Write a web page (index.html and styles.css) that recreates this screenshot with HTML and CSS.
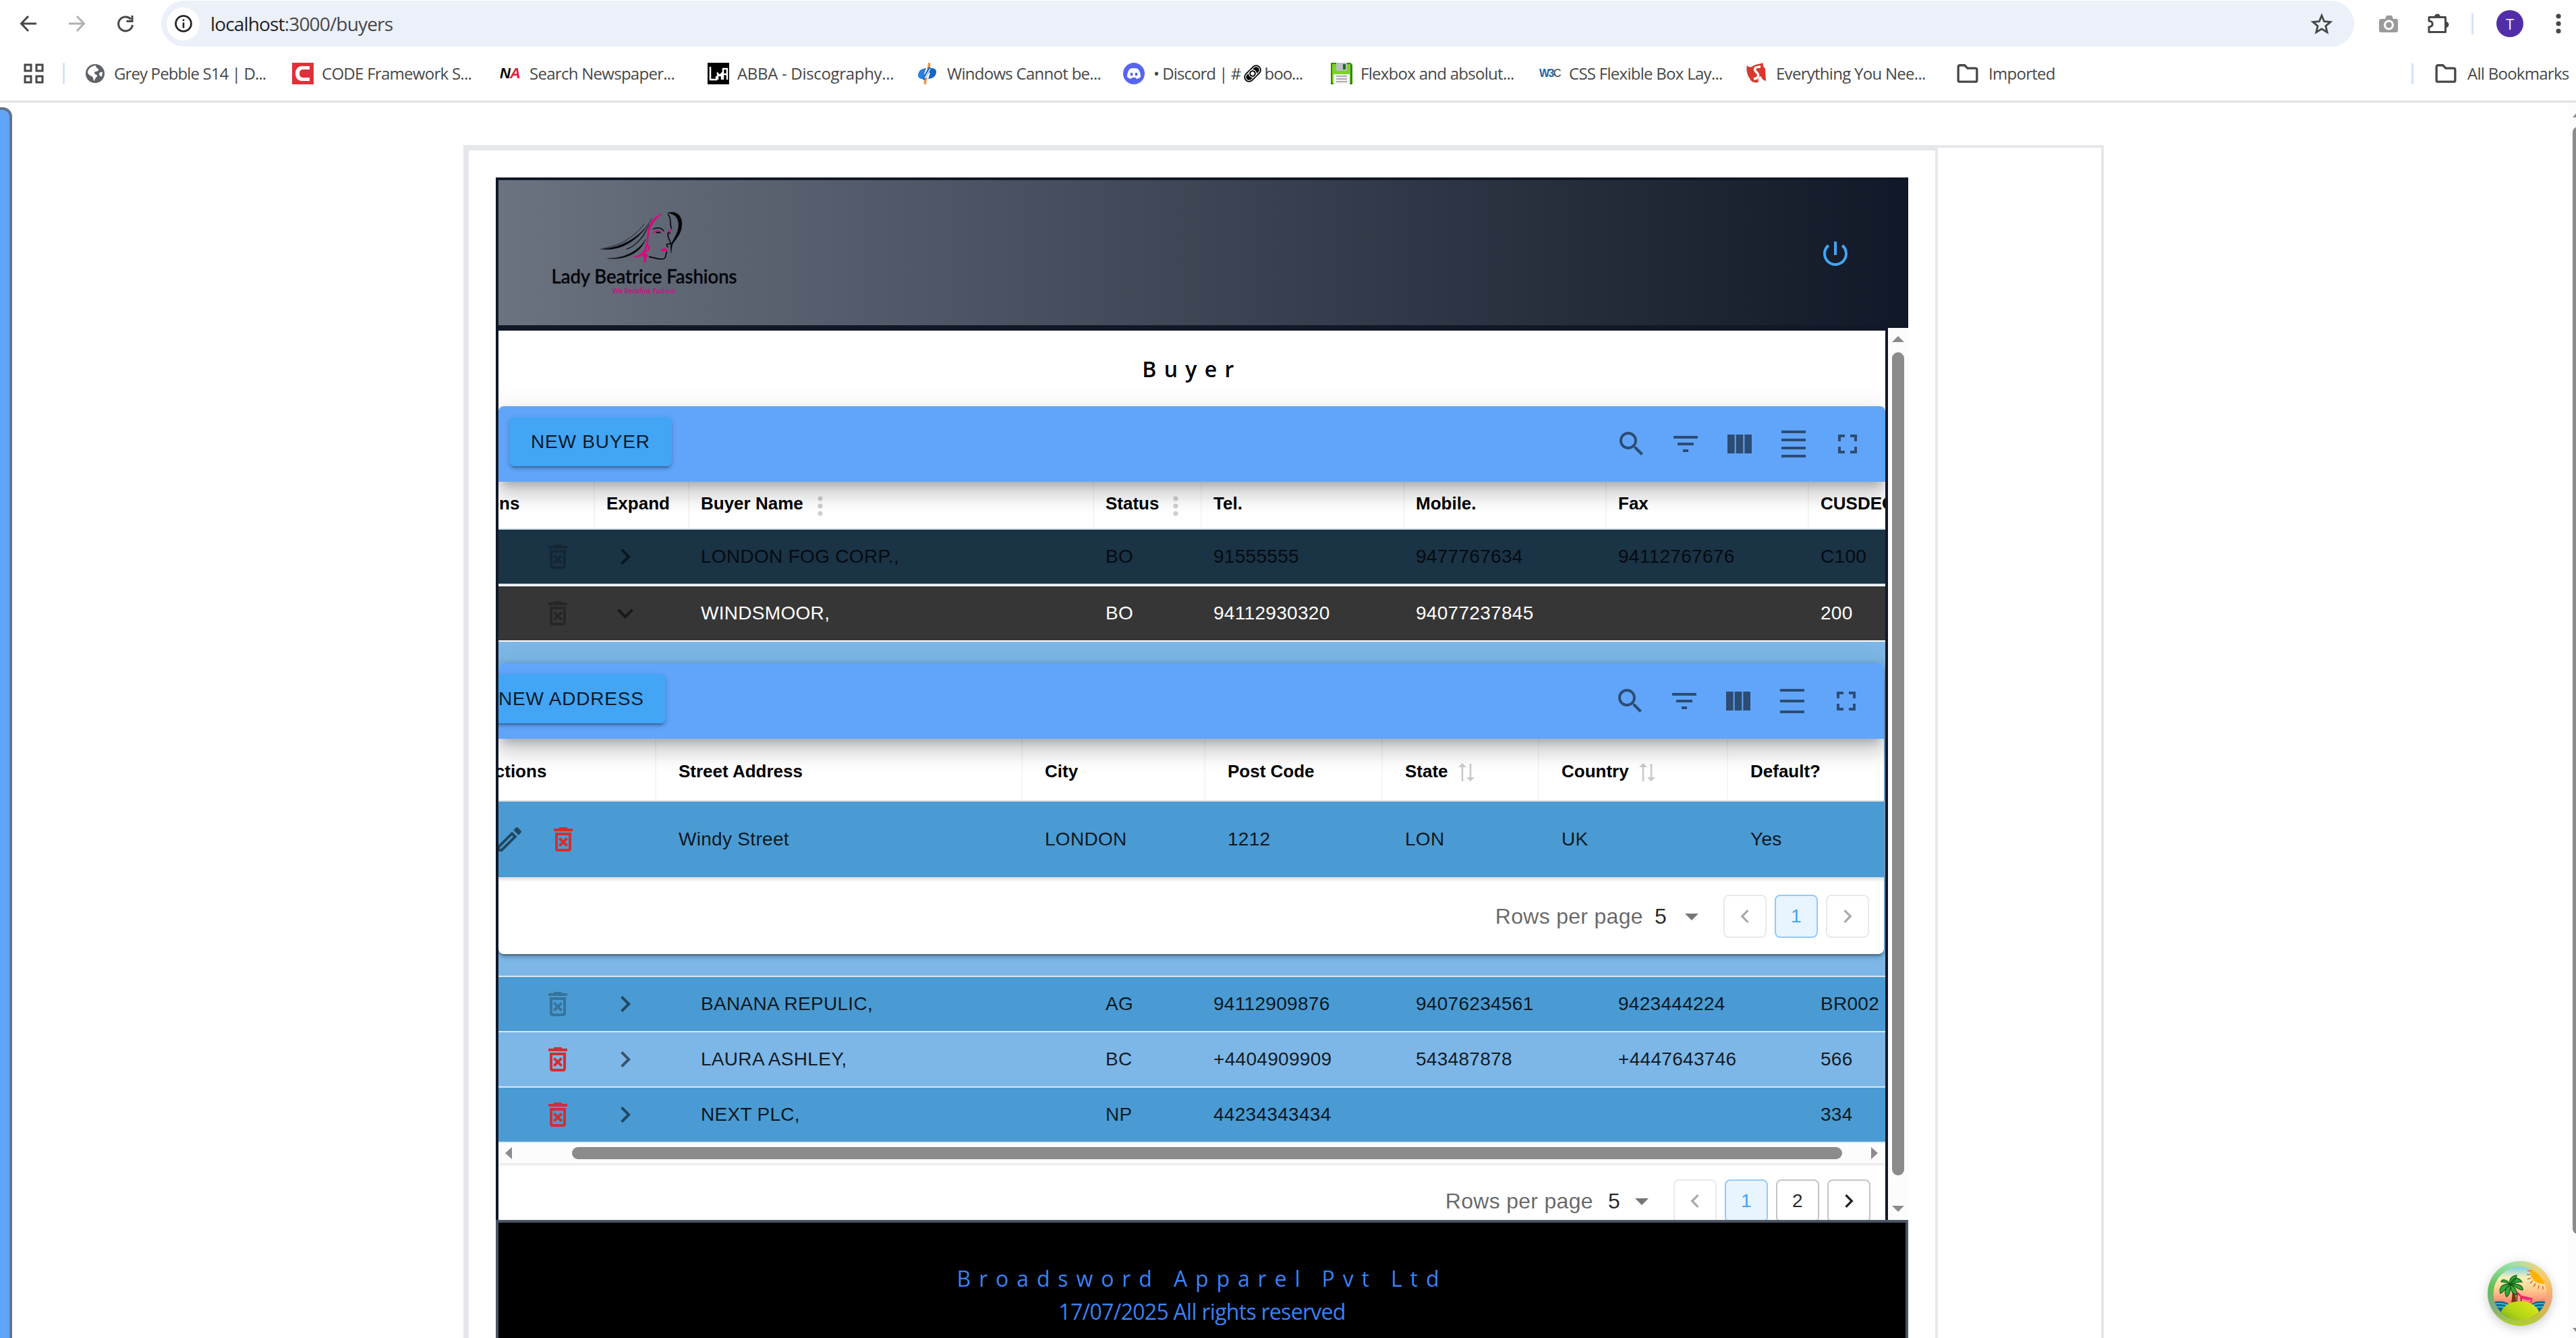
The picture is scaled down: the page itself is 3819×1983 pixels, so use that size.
FILE: index.html
```
<!DOCTYPE html>
<html lang="en">
<head>
<meta charset="utf-8">
<title>Buyers</title>
<link rel="stylesheet" href="styles.css">
</head>
<body>
<svg class="defs" width="0" height="0" aria-hidden="true">
  <symbol id="search" viewBox="0 0 24 24"><path d="M15.5 14h-.79l-.28-.27C15.41 12.59 16 11.11 16 9.5 16 5.91 13.09 3 9.5 3S3 5.91 3 9.5 5.91 16 9.5 16c1.61 0 3.09-.59 4.23-1.57l.27.28v.79l5 4.99L20.49 19l-4.99-5zm-6 0C7.01 14 5 11.99 5 9.5S7.01 5 9.5 5 14 7.01 14 9.5 11.99 14 9.5 14z"/></symbol>
  <symbol id="filter" viewBox="0 0 24 24"><path d="M10 18h4v-2h-4v2zM3 6v2h18V6H3zm3 7h12v-2H6v2z"/></symbol>
  <symbol id="columns" viewBox="0 0 24 24"><path d="M14.67 5v14H9.33V5h5.34zm1 14H21V5h-5.33v14zm-7.34 0V5H3v14h5.33z"/></symbol>
  <symbol id="dense" viewBox="0 0 24 24"><path d="M3 2h18v2H3zM3 20h18v2H3zM3 14h18v2H3zM3 8h18v2H3z"/></symbol>
  <symbol id="loose" viewBox="0 0 24 24"><path d="M3 3h18v2H3zM3 19h18v2H3zM3 11h18v2H3z"/></symbol>
  <symbol id="fullscreen" viewBox="0 0 24 24"><path d="M7 14H5v5h5v-2H7v-3zm-2-4h2V7h3V5H5v5zm12 7h-3v2h5v-5h-2v3zM14 5v2h3v3h2V5h-5z"/></symbol>
  <symbol id="trash" viewBox="0 0 24 24"><path d="M14.12 10.47 12 12.59l-2.13-2.12-1.41 1.41L10.59 14l-2.12 2.12 1.41 1.41L12 15.41l2.12 2.12 1.41-1.41L13.41 14l2.12-2.12zM15.5 4l-1-1h-5l-1 1H5v2h14V4zM6 19c0 1.1.9 2 2 2h8c1.1 0 2-.9 2-2V7H6v12zM8 9h8v10H8V9z"/></symbol>
  <symbol id="edit" viewBox="0 0 24 24"><path d="m14.06 9.02.92.92L5.92 19H5v-.92l9.06-9.06M17.66 3c-.25 0-.51.1-.7.29l-1.83 1.83 3.75 3.75 1.83-1.83c.39-.39.39-1.02 0-1.41l-2.34-2.34c-.2-.2-.45-.29-.71-.29zm-3.6 3.19L3 17.25V21h3.75L17.81 9.94l-3.75-3.75z"/></symbol>
  <symbol id="expand" viewBox="0 0 24 24"><path d="M16.59 8.59 12 13.17 7.41 8.59 6 10l6 6 6-6z"/></symbol>
  <symbol id="prev" viewBox="0 0 24 24"><path d="M15.41 7.41 14 6l-6 6 6 6 1.41-1.41L10.83 12z"/></symbol>
  <symbol id="next" viewBox="0 0 24 24"><path d="M10 6 8.59 7.41 13.17 12l-4.58 4.59L10 18l6-6z"/></symbol>
  <symbol id="drop" viewBox="0 0 24 24"><path d="m7 10 5 5 5-5z"/></symbol>
  <symbol id="more" viewBox="0 0 8 30"><circle cx="4" cy="4" r="3.6"/><circle cx="4" cy="15" r="3.6"/><circle cx="4" cy="26" r="3.6"/></symbol>
  <symbol id="sort" viewBox="0 0 24 28"><path d="M6 0 0 6h4.7v21h2.6V6H12zM16.7 1v20H12l6 6 6-6h-4.7V1z"/></symbol>
  <symbol id="power" viewBox="0 0 24 24"><path d="M13 3h-2v10h2V3zm4.83 2.17-1.42 1.42C17.99 7.86 19 9.81 19 12c0 3.87-3.13 7-7 7s-7-3.13-7-7c0-2.19 1.01-4.14 2.58-5.42L6.17 5.17C4.23 6.82 3 9.26 3 12c0 4.97 4.03 9 9 9s9-4.03 9-9c0-2.74-1.23-5.18-3.17-6.83z"/></symbol>
  <symbol id="folder" viewBox="0 0 32 28"><path d="M3.5 4.5a2 2 0 0 1 2-2h6.5l4 4h10.500a2 2 0 0 1 2 2v14a2 2 0 0 1-2 2h-21a2 2 0 0 1-2-2z" fill="none" stroke="#474747" stroke-width="3"/></symbol>
</svg>

<header class="browser">
  <div class="toolbar">
    <svg class="nav" viewBox="0 0 26 26"><path d="M25 13H3M13 2 2.500 13 13 24" fill="none" stroke="#474747" stroke-width="3"/></svg>
    <svg class="nav" viewBox="0 0 26 26"><path d="M1 13h22M13 2l10.500 11L13 24" fill="none" stroke="#b0b0b0" stroke-width="3"/></svg>
    <svg class="nav" viewBox="0 0 26 26"><path d="M23.500 15A10.500 10.500 0 1 1 21 6.500" fill="none" stroke="#474747" stroke-width="3"/><path d="M24.500 1v10h-10V8h7V1z" fill="#474747"/></svg>
    <div class="omnibox">
      <div class="site-info"><svg width="28" height="28" viewBox="0 0 28 28"><circle cx="14" cy="14" r="11.500" fill="none" stroke="#1f1f1f" stroke-width="2.600"/><path d="M12.700 12.500h2.600v8h-2.600zM12.700 7.500h2.600v2.800h-2.600z" fill="#1f1f1f"/></svg></div>
      <div class="url"><span>localhost</span>:3000/buyers</div>
      <svg class="star" width="34" height="32" viewBox="0 0 34 32"><path d="m17 4 3.600 8.700 9.400.8-7.100 6.100 2.200 9.200L17 23.900l-8.100 4.900 2.200-9.200L4 13.500l9.400-.8z" fill="none" stroke="#474747" stroke-width="2.800"/></svg>
    </div>
    <div class="actions">
      <svg width="32" height="32" viewBox="0 0 32 32"><path d="M4 9h6l2-5h8l2 5h4a3 3 0 0 1 3 3v14a3 3 0 0 1-3 3H4a3 3 0 0 1-3-3V12a3 3 0 0 1 3-3z" fill="#9b9b9b"/><circle cx="15.500" cy="18" r="6" fill="none" stroke="#fff" stroke-width="3"/></svg>
      <svg class="puzzle" width="34" height="34" viewBox="0 0 34 34"><path d="M3 7.500h24.500V16v13.500H3V22c7-1 7-8 0-9z" fill="none" stroke="#474747" stroke-width="3" stroke-linejoin="round"/><path d="M11 7a4.500 4.500 0 0 1 9 0zM28 14a4.500 4.500 0 0 1 0 9z" fill="#474747"/></svg>
      <i class="rule"></i>
      <b class="avatar">T</b>
      <svg class="kebab" width="8" height="30" fill="#474747"><use href="#more"/></svg>
    </div>
  </div>
  <nav class="bookmarks">
    <svg width="30" height="30" viewBox="0 0 30 30"><path d="M2 2h9v9H2zM19 2h9v9h-9zM2 19h9v9H2zM19 19h9v9h-9z" fill="none" stroke="#474747" stroke-width="3"/></svg>
    <i class="rule"></i>
    <div class="links">
      <a class="globe"><svg width="28" height="28" viewBox="0 0 28 28"><circle cx="14" cy="14" r="14" fill="#5f6368"/><path d="M15 2c-1 4 5 4 4 7-2 3-6 1-6 4s5 2 4 5c-2 2-3 3-4 7-2-1-1-5-4-7-3-1-5-3-6-5 0-6 5-10 12-11zM25 12c-3-1-5 1-5 3s3 3 4 4z" fill="#fff"/></svg>Grey Pebble S14 | D...</a>
      <a><svg viewBox="0 0 32 32"><path d="M0 0h32v32H0z" fill="#e0303a"/><path d="M26 10V5H14Q5 6 5 16t9 11h12v-5H15q-4-1-4-6t4-6z" fill="#fff"/></svg>CODE Framework S...</a>
      <a class="wide"><em class="na">N<span>A</span></em>Search Newspaper...</a>
      <a class="abba"><svg viewBox="0 0 32 32"><path d="M0 0h32v32H0z"/><path d="M4 6v19h9v-5M15 25v-9l3 3 3-3v9M23 25V9h6v16M23 17h6" fill="none" stroke="#fff" stroke-width="2.500"/></svg>ABBA - Discography...</a>
      <a class="wide"><svg viewBox="0 0 32 32"><path d="M17 0c2 4-1 6-1 10M12 32c-2-4 1-6 1-10" fill="none" stroke="#f6923a" stroke-width="3.500"/><path d="M1 18c1-7 5-9 12-10l-3 9 3 1-3 6c-6 0-9-1-9-6z" fill="#2a7fe0"/><path d="M28 14c-1 7-5 9-12 10l3-9-3-1 3-6c6 0 9 1 9 6z" fill="#1565c8"/><path d="m9 25 10-18" stroke="#1565c8" stroke-width="4"/><path d="m11 23 8-14" stroke="#fff" stroke-width="1.500"/></svg>Windows Cannot be...</a>
      <a class="discord"><svg viewBox="0 0 32 32"><circle cx="16" cy="16" r="16" fill="#5865f2"/><path d="M10 9q6-2 12 0 4 5 4 12-3 3-6 3l-1-2h-6l-1 2q-3 0-6-3 0-7 4-12z" fill="#fff"/><ellipse cx="12.500" cy="17" rx="2" ry="2.500" fill="#5865f2"/><ellipse cx="19.500" cy="17" rx="2" ry="2.500" fill="#5865f2"/></svg>• Discord | #<svg class="chain" viewBox="0 0 28 28"><g transform="rotate(-45 14 14)" fill="none"><rect x="-1" y="6.500" width="30" height="15" rx="7.500" fill="#000"/><rect x="1.500" y="9" width="25" height="10" rx="5" stroke="#fff" stroke-width="1.200"/><circle cx="14" cy="14" r="5.500" fill="#000" stroke="#fff" stroke-width="1.300"/><circle cx="14" cy="14" r="2.800" fill="#fff"/></g></svg>boo...</a>
      <a><svg viewBox="0 0 32 32"><path d="M0 0h29l3 3v29H0z" fill="#2d8a10"/><path d="M2 2h27v28H2z" fill="#7bd321"/><path d="M8 0h16v12H8z" fill="#b9bec2"/><path d="M18 2h4v8h-4z" fill="#256b12"/><path d="M4 17h24v15H4z" fill="#f5f5f5"/><path d="M8 20h16M8 24h16M8 28h16" stroke="#aaa" stroke-width="2"/></svg>Flexbox and absolut...</a>
      <a class="wide"><em class="w3c">W3<span>C</span></em>CSS Flexible Box Lay...</a>
      <a class="wide"><svg viewBox="0 0 32 32"><path d="M1 4c2 2 4 3 7 2 5-4 12-4 17-6-1 4 0 5 3 9l1 18c-4-1-6-3-7-7-4 1-5 4-4 9-6 1-10 0-12-4C2 20-1 11 1 4z" fill="#d8382c"/><path d="M21 6c-8 0-11 3-6 8s3 9-4 10" fill="none" stroke="#fff" stroke-width="3.500"/></svg>Everything You Nee...</a>
      <a class="dir"><svg viewBox="0 0 32 28"><use href="#folder"/></svg>Imported</a>
    </div>
    <i class="rule end"></i>
    <a class="all"><svg viewBox="0 0 32 28"><use href="#folder"/></svg>All Bookmarks</a>
  </nav>
</header>

<div class="page">
  <aside class="drawer"></aside>
  <div class="outer"><div class="inner"><main class="panel">
    <header class="banner">
      <svg class="logo" width="280" height="136" viewBox="0 0 280 136">
        <g transform="translate(45 -8) scale(.3333)" fill="none" stroke="#05060a" stroke-width="5" stroke-linecap="round">
          <path d="M92 207C180 206 280 150 319 70 270 165 180 222 92 207z" fill="#05060a" stroke-width="1"/>
          <path d="M105 204C190 190 250 145 285 95" stroke-width="2"/>
          <path d="M205 208C250 192 282 160 296 118M213 207C250 190 290 140 306 100" stroke-width="2.500"/>
          <path d="M122 249C200 250 262 215 292 163 270 225 200 258 122 249z" fill="#05060a" stroke-width="1"/>
          <path d="M370 48C325 62 300 95 298 150 296 195 285 238 232 242 275 252 300 225 304 160 308 110 325 80 370 48z" fill="#e5007e" stroke="none"/>
          <path d="M300 190C312 200 306 216 292 218" stroke="#e5007e" stroke-width="6"/>
          <circle cx="289" cy="237" r="11" fill="#e5007e" stroke="none"/><ellipse cx="288" cy="257" rx="6" ry="9" fill="#e5007e" stroke="none"/>
          <path d="M388 47C430 34 453 60 453 95 453 140 425 162 410 188L405 226 402 190C420 155 440 130 438 95 436 65 418 50 388 47z" fill="#05060a" stroke-width="1"/>
          <path d="M391 54C409 72 396 92 406 115" stroke-width="5"/>
          <path d="M325 118C345 110 362 112 372 127" stroke-width="4"/>
          <path d="M328 133q16-12 30-2M388 135q8-10 18-12" stroke="#e5007e" stroke-width="6"/>
          <path d="M340 134h16M392 136h8" stroke-width="5"/>
          <path d="M391 140C388 160 402 168 403 182 399 190 386 178 385 190L390 198"/>
          <path d="M358 211q16-14 30-2-8 18-30 2z" fill="#e5007e" stroke="none"/>
          <path d="M386 220C378 230 386 250 366 252 342 252 330 246 308 242"/>
        </g>
        <text class="brand" x="2.500" y="112" textLength="275" lengthAdjust="spacingAndGlyphs">Lady Beatrice Fashions</text>
        <text class="tagline" x="93" y="127" textLength="94" lengthAdjust="spacingAndGlyphs">We Redefine Fashion</text>
      </svg>
      <svg class="power" width="48" height="48"><use href="#power"/></svg>
    </header>

    <div class="scroll">
      <section class="content">
        <h1>Buyer</h1>
        <div class="bar">
          <button class="btn">NEW BUYER</button>
          <div class="tools"><svg><use href="#search"/></svg><svg><use href="#filter"/></svg><svg><use href="#columns"/></svg><svg><use href="#dense"/></svg><svg><use href="#fullscreen"/></svg></div>
        </div>
        <div class="head buyers"><div class="clip">Actions</div><div>Expand</div><div>Buyer Name<svg class="dots"><use href="#more"/></svg></div><div>Status<svg class="dots"><use href="#more"/></svg></div><div>Tel.</div><div>Mobile.</div><div>Fax</div><div>CUSDEC</div></div>
        <div class="row buyers selected"><div class="ico"><svg><use href="#trash"/></svg></div><div class="ico exp"><svg class="side"><use href="#expand"/></svg></div><div>LONDON FOG CORP.,</div><div>BO</div><div>91555555</div><div>9477767634</div><div>94112767676</div><div>C100</div></div>
        <div class="row buyers open"><div class="ico"><svg><use href="#trash"/></svg></div><div class="ico exp"><svg><use href="#expand"/></svg></div><div>WINDSMOOR,</div><div>BO</div><div>94112930320</div><div>94077237845</div><div></div><div>200</div></div>

        <div class="detail">
          <div class="paper">
            <div class="bar">
              <button class="btn">NEW ADDRESS</button>
              <div class="tools"><svg><use href="#search"/></svg><svg><use href="#filter"/></svg><svg><use href="#columns"/></svg><svg><use href="#loose"/></svg><svg><use href="#fullscreen"/></svg></div>
            </div>
            <div class="head address"><div class="clip">Actions</div><div>Street Address</div><div>City</div><div>Post Code</div><div>State<svg class="sort"><use href="#sort"/></svg></div><div>Country<svg class="sort"><use href="#sort"/></svg></div><div>Default?</div></div>
            <div class="row address"><div class="ico"><svg class="pen"><use href="#edit"/></svg><svg class="red"><use href="#trash"/></svg></div><div>Windy Street</div><div>LONDON</div><div>1212</div><div>LON</div><div>UK</div><div>Yes</div></div>
            <div class="pager">
              <span>Rows per page</span><b>5</b><svg class="drop"><use href="#drop"/></svg>
              <div class="pages"><a class="off"><svg><use href="#prev"/></svg></a><a class="on">1</a><a class="off"><svg><use href="#next"/></svg></a></div>
            </div>
          </div>
        </div>

        <div class="row buyers dark"><div class="ico faded"><svg><use href="#trash"/></svg></div><div class="ico exp"><svg class="side"><use href="#expand"/></svg></div><div>BANANA REPULIC,</div><div>AG</div><div>94112909876</div><div>94076234561</div><div>9423444224</div><div>BR002</div></div>
        <div class="row buyers light"><div class="ico"><svg class="red"><use href="#trash"/></svg></div><div class="ico exp"><svg class="side"><use href="#expand"/></svg></div><div>LAURA ASHLEY,</div><div>BC</div><div>+4404909909</div><div>543487878</div><div>+4447643746</div><div>566</div></div>
        <div class="row buyers dark"><div class="ico"><svg class="red"><use href="#trash"/></svg></div><div class="ico exp"><svg class="side"><use href="#expand"/></svg></div><div>NEXT PLC,</div><div>NP</div><div>44234343434</div><div></div><div></div><div>334</div></div>

        <div class="hbar"><svg width="10" height="18" viewBox="0 0 10 18"><path d="M10 0v18L0 9z"/></svg><i></i><svg width="10" height="18" viewBox="0 0 10 18"><path d="M0 0v18l10-9z"/></svg></div>
        <div class="pager main">
          <span>Rows per page</span><b>5</b><svg class="drop"><use href="#drop"/></svg>
          <div class="pages"><a class="off"><svg><use href="#prev"/></svg></a><a class="on">1</a><a>2</a><a><svg><use href="#next"/></svg></a></div>
        </div>
      </section>
      <div class="vbar"><svg width="18" height="9" viewBox="0 0 18 9"><path d="M0 9 9 0l9 9z"/></svg><i></i><svg width="18" height="9" viewBox="0 0 18 9"><path d="M0 0h18L9 9z"/></svg></div>
    </div>

    <footer><p class="company">Broadsword Apparel Pvt Ltd</p><p class="rights">17/07/2025 All rights reserved</p></footer>
  </main></div></div>
  <div class="winbar"><svg width="5" height="6" viewBox="0 0 5 6"><path d="M0 6 5 0v6z"/></svg><i></i><svg width="5" height="6" viewBox="0 0 5 6"><path d="M0 0h5v6z"/></svg></div>

  <svg class="devtools" width="120" height="120" viewBox="0 0 120 120">
    <defs>
      <linearGradient id="shade" x1="0" y1="0" x2="0" y2="1"><stop offset="0" stop-color="#9be7b4"/><stop offset=".4" stop-color="#63bf52"/><stop offset=".7" stop-color="#7dab82"/><stop offset="1" stop-color="#b3d12c"/></linearGradient>
      <linearGradient id="warm" x1="0" y1="0" x2="0" y2="1"><stop offset="0" stop-color="#e8d98a"/><stop offset=".3" stop-color="#fcc764"/><stop offset=".6" stop-color="#f3a276"/><stop offset="1" stop-color="#b3d12c"/></linearGradient>
      <linearGradient id="fade"><stop offset=".35" stop-color="#fff" stop-opacity="0"/><stop offset=".75" stop-color="#fff"/></linearGradient>
      <mask id="right"><path d="M0 0h120v120H0z" fill="url(#fade)"/></mask>
      <linearGradient id="sky" x1="0" y1="0" x2="0" y2="1"><stop offset="0" stop-color="#74cdf0"/><stop offset=".2" stop-color="#f2f0b8"/><stop offset=".38" stop-color="#ffd79a"/><stop offset=".65" stop-color="#ff8f70"/></linearGradient>
      <linearGradient id="sand" x1="0" y1="1" x2="1" y2="0"><stop offset="0" stop-color="#5a9e10"/><stop offset=".5" stop-color="#b5d516"/><stop offset="1" stop-color="#e2ec1c"/></linearGradient>
      <clipPath id="disc"><circle cx="60" cy="60" r="39.500"/></clipPath>
    </defs>
    <circle cx="60" cy="60" r="48" fill="url(#shade)"/>
    <circle cx="60" cy="60" r="48" fill="url(#warm)" mask="url(#right)"/>
    <g clip-path="url(#disc)">
      <path d="M20 20h80v80H20z" fill="url(#sky)"/>
      <circle cx="94" cy="27" r="19" fill="#ffb300"/>
      <g stroke="#e8622c" stroke-width="1.500"><path d="m76 27-5-1M75 32h-5M76 37l-5 2M79 41l-4 4M83 45l-3 5M88 48l-1 5M94 49v5"/></g>
      <path d="M20 73q14-4 24 3v30H20zM100 73q-14-4-24 3v30h24z" fill="#0a5f80"/>
      <path d="M20 76q14-3 22 2M20 81q12-3 19 1M100 76q-14-3-22 2M100 81q-12-3-19 1" stroke="#22b6da" stroke-width="2.500" fill="none"/>
      <path d="M47 46c2 9 2 17 0 27h7c0-11-2-19-6-28z" fill="#7a3510"/>
      <g fill="#35a936" stroke="#0e5a18" stroke-width="1.200"><path d="M46 47C40 37 32 39 32 43c4 0 8 0 14 4zM46 47C34 44 28 52 31 60c5-2 8-9 15-13zM46 47c-8 4-10 11-6 18 5-3 6-10 6-18zM46 47c0 8 3 14 9 15 1-7-3-12-9-15zM46 47c7 1 11 8 18 8 1-6-7-11-18-8zM46 47c2-9 10-14 17-4-5-1-10 1-17 4zM46 47c-4-9 3-13 9-14 0 5-4 9-9 14z"/></g>
      <path d="m55 58 6 6 16 4-1 6M60 66l14 3" stroke="#f0267a" stroke-width="2.500" fill="none"/><path d="m56 60-1 12M62 67l-1 8" stroke="#3a1020" stroke-width="1.200"/>
      <ellipse cx="60" cy="92" rx="29" ry="20.500" fill="url(#sand)"/>
    </g>
  </svg>
</div>
</body>
</html>
```
FILE: styles.css
```
* { box-sizing: border-box; }
html, body { margin: 0; height: 100%; overflow: hidden; background: #fff; }
body { display: flex; flex-direction: column; font-family: "Liberation Sans", Arial, sans-serif; color: rgba(0, 0, 0, .87); }
svg { display: block; flex: none; }
i { display: block; }
.defs { position: absolute; }

/* Browser chrome */
.browser { flex: none; height: 152px; border-bottom: 3px solid #e0e0e0; font-family: "Open Sans", sans-serif; color: #474747; }
.toolbar { display: flex; align-items: center; height: 70px; padding-left: 29px; }
.nav { width: 26px; height: 26px; margin-right: 46px; }
.nav:nth-child(3) { margin-right: 40px; }
.omnibox { display: flex; align-items: center; width: 3251px; height: 68px; padding-left: 8px; border-radius: 34px; background: #ebf0f9; }
.site-info { display: flex; align-items: center; justify-content: center; width: 49px; height: 49px; border-radius: 50%; background: #fff; }
.url { flex: 1; margin-left: 16px; font-size: 28px; line-height: 68px; letter-spacing: -.84px; }
.url span { color: #1f1f1f; }
.star { margin-right: 31px; }
.actions { display: flex; align-items: center; flex: 1; padding-left: 36px; }
.puzzle { margin: 0 32px 0 40px; }
.rule { flex: none; width: 3px; height: 32px; border-radius: 2px; background: #d3e3fd; }
.avatar { flex: none; width: 40px; height: 40px; margin: 0 48px 0 34px; border-radius: 50%; background: #512da8; color: #fff; font: 400 22px/40px "Open Sans", sans-serif; text-align: center; }
.bookmarks { display: flex; align-items: center; height: 78px; padding-left: 35px; font-size: 24px; letter-spacing: -.72px; white-space: nowrap; }
.bookmarks > .rule { margin-left: 28px; }
.bookmarks > .rule.end { margin-left: -1px; }
.bookmarks a { display: flex; align-items: center; line-height: 30px; }
.bookmarks a > svg, .na, .w3c { width: 32px; height: 32px; margin-right: 12px; }
.links { display: grid; flex: none; grid-template-columns: 306px 308px 308px 311px 305px 308px 309px 307px 311px 1fr; width: 3449px; margin-left: 31px; }
.bookmarks a.globe > svg { width: 28px; height: 28px; margin-right: 14px; }
.bookmarks .globe { letter-spacing: -.88px; }
.bookmarks .abba { letter-spacing: -.32px; }
.bookmarks .discord > svg:first-child { margin-right: 13px; }
.bookmarks .discord { letter-spacing: -.95px; }
.bookmarks a > .chain { width: 28px; height: 28px; margin: 0 3px 0 4px; }
.bookmarks .dir > svg { width: 36px; height: 31px; margin: 0 13px 0 -1px; }
.bookmarks a.all { margin-left: 30px; }
.bookmarks .all > svg { width: 36px; height: 31px; margin-right: 14px; }
.na { font: italic 900 22px/32px "Liberation Sans", Arial, sans-serif; letter-spacing: -1px; color: #000; }
.na span { color: #e0203a; }
.w3c { font: 700 16px/32px "Liberation Sans", Arial, sans-serif; letter-spacing: -1.500px; color: #1a63a8; }
.w3c span { color: #333; font-weight: 400; }

/* Page frame */
.page { position: relative; display: flex; flex: 1; min-height: 0; }
.drawer { width: 18px; margin-top: 7px; border: solid #64748b; border-width: 4px 4px 0 0; border-radius: 0 14px 0 0; background: #60a5fa; }
.outer { width: 2432px; margin: 63px 0 0 669px; border: 4px solid #e5e7eb; border-bottom: 0; }
.inner { width: 2182px; height: 100%; padding: 40px; padding-bottom: 0; border: 4px solid #e5e7eb; border-bottom: 0; }
.panel { display: flex; flex-direction: column; width: 2094px; height: 100%; }
.winbar { display: flex; flex-direction: column; width: 11px; margin-left: auto; padding: 16px 0 9px 6px; background: #fcfcfc; overflow: hidden; fill: #8b8b8b; }
.winbar i { flex: 1; width: 16px; margin: 14px 0 139px; border-radius: 8px; background: #8b8b8b; }
.devtools { position: absolute; left: 3676px; top: 1705px; filter: drop-shadow(0 4px 8px rgba(0, 0, 0, .2)); }

.banner { display: flex; align-items: center; justify-content: space-between; flex: none; height: 223px; padding: 0 80px 0 76px; border: 4px solid #111827; background: linear-gradient(90deg, #6b7280, #4b5563 33%, #111827) padding-box; }
.logo { margin-top: 3px; }
.brand { font: 500 29px Lato, sans-serif; fill: #05060a; stroke: #05060a; stroke-width: .5px; }
.tagline { font: 700 11.500px Lato, sans-serif; fill: #cf0f80; }
.power { margin-top: 2px; fill: #42a5f5; }

.scroll { display: flex; flex: none; height: 1322px; overflow: hidden; }
.content { width: 2064px; height: 1400px; border: 4px solid #111827; overflow: hidden; }
h1 { height: 112px; margin: 0; text-align: center; font: 600 32px/114px "Open Sans", sans-serif; letter-spacing: 11.300px; color: #000; }

/* Coloured action bars */
.bar { position: relative; z-index: 1; display: flex; align-items: center; justify-content: space-between; height: 112px; padding: 0 16px; border-radius: 8px 8px 0 0; background: #60a5fa; box-shadow: 0 12px 12px -6px rgba(0, 0, 0, .16), 0 20px 28px 2px rgba(0, 0, 0, .13), 0 8px 36px 6px rgba(0, 0, 0, .09); }
.btn { height: 73px; margin: 0 0 7px; padding: 0 32px; border: 0; border-radius: 8px; background: #42a5f5; color: rgba(0, 0, 0, .87); font: 28px "Liberation Sans", Arial, sans-serif; letter-spacing: .8px; white-space: nowrap; box-shadow: 0 6px 2px -4px rgba(0, 0, 0, .2), 0 4px 4px rgba(0, 0, 0, .14), 0 2px 10px rgba(0, 0, 0, .12); }
.tools { display: flex; gap: 32px; padding-right: 16px; fill: rgba(0, 0, 0, .54); }
.tools svg { width: 48px; height: 48px; }

/* Table rows */
.head, .row { display: grid; white-space: nowrap; }
.head > div, .row > div { display: flex; align-items: center; min-width: 0; padding-left: 17px; }
.buyers { grid-template-columns: 143px 140px 600px 160px 300px 300px 300px 113px; }
.address { grid-template-columns: 234px 543px 271px 263px 232px 280px 231px; }
.head { height: 71px; border-bottom: 2px solid #d5e0e8; font-size: 26px; font-weight: 700; color: #000; }
.head > div { padding-bottom: 4px; border-right: 2px solid #f5f5f5; }
.head > div:last-child { border-right: 0; }
.head .clip { padding-left: 0; text-indent: -64px; overflow: hidden; }
.dots { width: 8px; height: 30px; margin: 3px 0 -3px 21px; fill: #cfcfcf; }
.sort { width: 24px; height: 28px; margin: 3px 0 0 15px; fill: #cacaca; }
.row { height: 82px; border-bottom: 2px solid #dce6ee; font-size: 28px; letter-spacing: .3px; }
.row svg { width: 48px; height: 48px; fill: rgba(0, 0, 0, .54); }
.row .ico { padding-left: 64px; }
.row .exp { padding-left: 21px; }
.row .side { transform: rotate(-90deg); }
.row .red { fill: #d32f2f; }
.row .faded svg { fill: rgba(0, 0, 0, .26); }
.selected { background: #1a3345; color: #060b10; }
.selected svg { fill: #0f1c27; }
.row.selected .side { fill: #0b161f; }
.selected .ico:first-child svg, .open .ico:first-child svg { opacity: .5; }
.open { height: 84px; border-top: 2px solid #fff; border-bottom-color: #fff; background: #363636; color: #fff; }
.open svg { fill: #191919; }
.dark { background: #4a9bd3; }
.light { background: #7cb7e7; }

/* Expanded buyer */
.detail { height: 497px; padding-top: 32px; border-bottom: 2px solid #dce6ee; background: #7cb7e7; overflow: hidden; }
.paper { width: 2054px; height: 431px; border-radius: 8px; background: #fff; box-shadow: 0 4px 2px -2px rgba(0, 0, 0, .25), 0 3px 6px rgba(0, 0, 0, .25), 0 2px 12px rgba(0, 0, 0, .12); }
.paper .btn { margin-left: -48px; margin-bottom: 7px; }
.paper .head { height: 93px; border-bottom-color: #e0e0e0; }
.paper .head > div { padding: 5px 0 0 33px; }
.paper .head .clip { padding-left: 0; text-indent: -24px; }
.paper .row { height: 114px; border-bottom-color: #e0e0e0; background: #4a9bd3; }
.paper .row > div { padding-left: 33px; }
.paper .row .ico { padding-left: 0; }
.paper .pen { margin: 0 32px 0 -8px; }

/* Pagination */
.pager { display: flex; align-items: center; justify-content: flex-end; height: 112px; padding-right: 22px; font-size: 32px; color: rgba(0, 0, 0, .6); letter-spacing: .3px; box-shadow: inset 0 5px 4px -3px rgba(0, 0, 0, .12); }
.pager b { margin-left: 17px; font-weight: 400; color: rgba(0, 0, 0, .87); }
.drop { width: 48px; height: 48px; margin-left: 13px; fill: rgba(0, 0, 0, .54); }
.pages { display: flex; gap: 12px; margin-left: 23px; }
.pages a { display: flex; align-items: center; justify-content: center; width: 64px; height: 64px; border: 2px solid rgba(0, 0, 0, .23); border-radius: 8px; font-size: 28px; color: rgba(0, 0, 0, .87); fill: rgba(0, 0, 0, .87); }
.pages svg { width: 40px; height: 40px; }
.pages .on { border-color: #94caf8; background: #e8f4fe; color: #42a5f5; }
.pages .off { opacity: .38; }
.pager.main b { margin-left: 22px; }
.pager.main .drop { margin-left: 8px; }

/* Scrollbars */
.hbar { display: flex; align-items: center; height: 30px; padding: 0 11px 0 10px; background: #fcfcfc; fill: #8b8b8b; }
.hbar i { flex: 1; height: 18px; margin: 0 43px 0 89px; border-radius: 9px; background: #8b8b8b; }
.vbar { display: flex; flex-direction: column; align-items: center; width: 30px; height: 1322px; padding: 12px 0; background: #fcfcfc; fill: #8b8b8b; }
.vbar i { width: 18px; height: 1220px; margin: 15px 0 45px; border-radius: 9px; background: #8b8b8b; }

footer { flex: 1; padding-top: 58px; border: 4px solid #4b5563; border-bottom: 0; background: #000; color: #3b82f6; text-align: center; font: 32px/49px "Open Sans", sans-serif; }
footer p { margin: 0; }
.company { letter-spacing: 11.880px; }
.rights { letter-spacing: -.72px; }
```
